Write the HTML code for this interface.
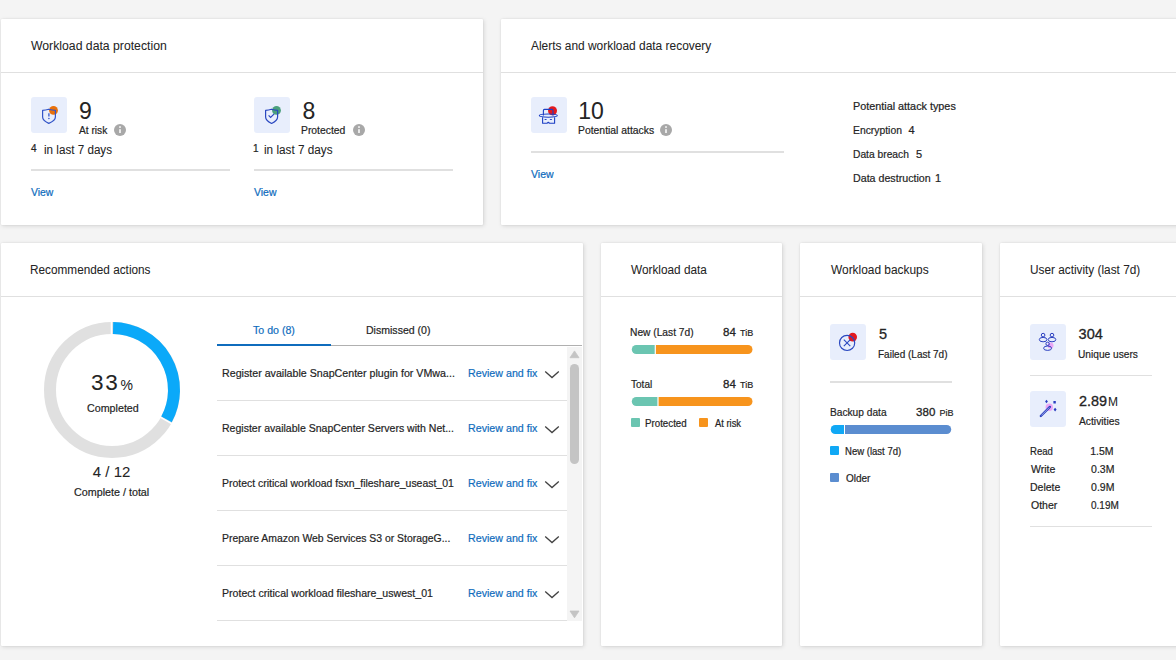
<!DOCTYPE html>
<html><head><meta charset="utf-8"><style>
html,body{margin:0;padding:0;}
body{width:1176px;height:660px;overflow:hidden;background:#f4f4f4;position:relative;font-family:"Liberation Sans",sans-serif;}
.abs{position:absolute;}
.card{position:absolute;background:#fff;border-radius:1px;box-shadow:1px 1px 4px rgba(0,0,0,0.13),0 0 1.5px rgba(0,0,0,0.10);}
.ib{position:absolute;width:36px;height:36px;background:#e8eefc;border-radius:3px;}
.ib svg{display:block}
.t{position:absolute;white-space:nowrap;line-height:1;transform-origin:0 0;}
.m{display:inline-block;width:0;height:0;}
</style></head><body>
<div class="card" style="left:1px;top:19px;width:482px;height:206px"></div>
<div class="card" style="left:501px;top:19px;width:700px;height:206px"></div>
<div class="card" style="left:1px;top:243px;width:582px;height:403px"></div>
<div class="card" style="left:601px;top:243px;width:181px;height:403px"></div>
<div class="card" style="left:800px;top:243px;width:182px;height:403px"></div>
<div class="card" style="left:1000px;top:243px;width:200px;height:403px"></div>
<div class="abs" style="left:1px;top:72px;width:482px;height:1px;background:#e0e0e0;"></div>
<div class="abs" style="left:501px;top:72px;width:700px;height:1px;background:#e0e0e0;"></div>
<div class="abs" style="left:1px;top:296px;width:582px;height:1px;background:#e0e0e0;"></div>
<div class="abs" style="left:601px;top:296px;width:181px;height:1px;background:#e0e0e0;"></div>
<div class="abs" style="left:800px;top:296px;width:182px;height:1px;background:#e0e0e0;"></div>
<div class="abs" style="left:1000px;top:296px;width:200px;height:1px;background:#e0e0e0;"></div>
<div class="ib" style="left:31px;top:97px"><svg width="36" height="36" viewBox="0 0 36 36"><circle cx="22.5" cy="13.4" r="4.4" fill="#e8700a"/><path d="M11.6 13.3 Q14.5 13.3 17.8 12.2 Q21.2 13.3 24.4 13.3 V20 Q24.4 23.5 17.8 26.4 Q11.6 23.5 11.6 20 Z" fill="none" stroke="#3355c8" stroke-width="1.2" stroke-linejoin="round"/><path d="M17.9 16.2 V19.4" stroke="#3355c8" stroke-width="1.3"/><circle cx="17.9" cy="21.5" r="0.8" fill="#3355c8"/></svg></div>
<svg class="abs" style="left:114px;top:124px" width="12" height="12" viewBox="0 0 12 12"><circle cx="6" cy="6" r="6" fill="#a8a8a8"/><rect x="5.1" y="2.2" width="1.8" height="1.7" fill="#f0f0f0"/><rect x="5.1" y="5.2" width="1.8" height="3.8" fill="#f0f0f0"/></svg>
<div class="abs" style="left:31px;top:169px;width:199px;height:2px;background:#e0e0e0;"></div>
<div class="ib" style="left:254px;top:97px"><svg width="36" height="36" viewBox="0 0 36 36"><circle cx="22.5" cy="13.4" r="4.4" fill="#4aa07c"/><path d="M11.6 13.3 Q14.5 13.3 17.6 12.2 Q20.8 13.3 23.6 13.3 V20 Q23.6 23.5 17.6 26.5 Q11.6 23.5 11.6 20 Z" fill="none" stroke="#2a48c0" stroke-width="1.2" stroke-linejoin="round"/><path d="M14.6 18.4 L16.6 20.4 L20.2 16.8" fill="none" stroke="#2a48c0" stroke-width="1.2"/></svg></div>
<svg class="abs" style="left:353px;top:124px" width="12" height="12" viewBox="0 0 12 12"><circle cx="6" cy="6" r="6" fill="#a8a8a8"/><rect x="5.1" y="2.2" width="1.8" height="1.7" fill="#f0f0f0"/><rect x="5.1" y="5.2" width="1.8" height="3.8" fill="#f0f0f0"/></svg>
<div class="abs" style="left:254px;top:169px;width:199px;height:2px;background:#e0e0e0;"></div>
<div class="ib" style="left:531px;top:97px"><svg width="36" height="36" viewBox="0 0 36 36"><circle cx="21.5" cy="13.8" r="4.5" fill="#e3191e"/><path d="M12.4 18.4 V13.4 Q12.4 12.4 13.4 12.4 H21 Q22 12.4 22 13.4 V18.4" fill="none" stroke="#1d3fc4" stroke-width="1.1"/><ellipse cx="17.3" cy="18.6" rx="9" ry="1.6" fill="none" stroke="#1d3fc4" stroke-width="1.1"/><path d="M11.6 20.2 V26.2 H16 L17.3 25.2 L18.6 26.2 H23.6 V20.2" fill="none" stroke="#1d3fc4" stroke-width="1.1" stroke-linejoin="round"/><ellipse cx="14.6" cy="22.5" rx="1.2" ry="0.6" fill="#1d3fc4"/><ellipse cx="19.9" cy="22.5" rx="1.2" ry="0.6" fill="#1d3fc4"/></svg></div>
<svg class="abs" style="left:660px;top:124px" width="12" height="12" viewBox="0 0 12 12"><circle cx="6" cy="6" r="6" fill="#a8a8a8"/><rect x="5.1" y="2.2" width="1.8" height="1.7" fill="#f0f0f0"/><rect x="5.1" y="5.2" width="1.8" height="3.8" fill="#f0f0f0"/></svg>
<div class="abs" style="left:531px;top:151px;width:253px;height:2px;background:#e0e0e0;"></div>
<svg class="abs" style="left:0;top:0" width="300" height="660"><circle cx="112" cy="389.9" r="62" fill="none" stroke="#e0e0e0" stroke-width="12"/><path d="M113.08 327.91 A62 62 0 0 1 166.49 419.48" fill="none" stroke="#0ba9f9" stroke-width="12"/><path d="M111.4 320.9 V334.9" stroke="#fff" stroke-width="1.4"/><path d="M165.96 420.43 L172.05 423.88 M159.87 416.98 L165.96 420.43" stroke="#fff" stroke-width="1.4"/></svg>
<div class="abs" style="left:217px;top:345px;width:365px;height:1px;background:#b0b0b0;"></div>
<div class="abs" style="left:217px;top:344px;width:114px;height:2px;background:#0f6cbd;"></div>
<div class="abs" style="left:217px;top:400px;width:350px;height:1px;background:#e0e0e0;"></div>
<svg class="abs" style="left:544px;top:370px" width="16" height="10" viewBox="0 0 16 10"><path d="M1.2 1.5 L8 7.6 L14.8 1.5" fill="none" stroke="#424242" stroke-width="1.3"/></svg>
<div class="abs" style="left:217px;top:455px;width:350px;height:1px;background:#e0e0e0;"></div>
<svg class="abs" style="left:544px;top:425px" width="16" height="10" viewBox="0 0 16 10"><path d="M1.2 1.5 L8 7.6 L14.8 1.5" fill="none" stroke="#424242" stroke-width="1.3"/></svg>
<div class="abs" style="left:217px;top:510px;width:350px;height:1px;background:#e0e0e0;"></div>
<svg class="abs" style="left:544px;top:480px" width="16" height="10" viewBox="0 0 16 10"><path d="M1.2 1.5 L8 7.6 L14.8 1.5" fill="none" stroke="#424242" stroke-width="1.3"/></svg>
<div class="abs" style="left:217px;top:565px;width:350px;height:1px;background:#e0e0e0;"></div>
<svg class="abs" style="left:544px;top:535px" width="16" height="10" viewBox="0 0 16 10"><path d="M1.2 1.5 L8 7.6 L14.8 1.5" fill="none" stroke="#424242" stroke-width="1.3"/></svg>
<div class="abs" style="left:217px;top:620px;width:350px;height:1px;background:#e0e0e0;"></div>
<svg class="abs" style="left:544px;top:590px" width="16" height="10" viewBox="0 0 16 10"><path d="M1.2 1.5 L8 7.6 L14.8 1.5" fill="none" stroke="#424242" stroke-width="1.3"/></svg>
<div class="abs" style="left:567px;top:347px;width:15px;height:274px;background:#f4f4f4;"></div>
<svg class="abs" style="left:567px;top:347px" width="15" height="274" viewBox="0 0 15 274"><path d="M3 10.7 L7.5 3.9 L12 10.7 Z" fill="#c4c4c4" stroke="#c4c4c4" stroke-width="0.8" stroke-linejoin="round"/><rect x="3" y="17" width="9" height="100" rx="4.5" fill="#c4c4c4"/><path d="M3 264 L7.5 270.8 L12 264 Z" fill="#c4c4c4" stroke="#c4c4c4" stroke-width="0.8" stroke-linejoin="round"/></svg>
<svg class="abs" style="left:631px;top:345px" width="122" height="9"><defs><clipPath id="c345"><rect x="0.8" y="0" width="120.7" height="9" rx="4.5"/></clipPath></defs><g clip-path="url(#c345)"><rect x="0" y="0" width="23.700000000000045" height="9" fill="#6bc5b1"/><rect x="24.900000000000045" y="0" width="130" height="9" fill="#f7941d"/></g></svg>
<svg class="abs" style="left:631px;top:397px" width="122" height="9"><defs><clipPath id="c397"><rect x="0.8" y="0" width="120.7" height="9" rx="4.5"/></clipPath></defs><g clip-path="url(#c397)"><rect x="0" y="0" width="26.399999999999977" height="9" fill="#6bc5b1"/><rect x="27.599999999999977" y="0" width="130" height="9" fill="#f7941d"/></g></svg>
<div class="abs" style="left:631px;top:418px;width:8.5px;height:8.5px;background:#6bc5b1;border-radius:1px"></div>
<div class="abs" style="left:699px;top:418px;width:8.5px;height:8.5px;background:#f7941d;border-radius:1px"></div>
<div class="ib" style="left:830px;top:324px"><svg width="36" height="36" viewBox="0 0 36 36"><circle cx="22.7" cy="13.1" r="4.3" fill="#e3191e"/><circle cx="17.1" cy="18.9" r="7.6" fill="none" stroke="#2a48c0" stroke-width="1.15"/><path d="M13.8 15.7 L20.3 22.2 M20.3 15.7 L13.8 22.2" stroke="#2a48c0" stroke-width="1.1"/></svg></div>
<div class="abs" style="left:830px;top:381px;width:122px;height:2px;background:#e0e0e0;"></div>
<svg class="abs" style="left:830px;top:425px" width="122" height="9"><defs><clipPath id="cb"><rect x="0.7" y="0" width="120.5" height="9" rx="4.5"/></clipPath></defs><g clip-path="url(#cb)"><rect x="0" y="0" width="14" height="9" fill="#10a8f5"/><rect x="15" y="0" width="130" height="9" fill="#5b8dd0"/></g></svg>
<div class="abs" style="left:830px;top:446px;width:9px;height:9px;background:#10a8f5;border-radius:1px"></div>
<div class="abs" style="left:830px;top:473px;width:9px;height:9px;background:#5b8dd0;border-radius:1px"></div>
<div class="ib" style="left:1030px;top:324px"><svg width="36" height="36" viewBox="0 0 36 36"><circle cx="20.5" cy="21.6" r="3" fill="#eaa6f5"/><circle cx="13.1" cy="11.1" r="1.8" fill="none" stroke="#2a3fc0" stroke-width="1"/><ellipse cx="13.1" cy="15.6" rx="3.8" ry="2.2" fill="none" stroke="#2a3fc0" stroke-width="1"/><circle cx="22" cy="11.1" r="1.8" fill="none" stroke="#2a3fc0" stroke-width="1"/><ellipse cx="22" cy="15.6" rx="3.8" ry="2.2" fill="none" stroke="#2a3fc0" stroke-width="1"/><circle cx="17.6" cy="19.8" r="1.7" fill="none" stroke="#2a3fc0" stroke-width="1"/><ellipse cx="17.6" cy="24.2" rx="4" ry="2.2" fill="none" stroke="#2a3fc0" stroke-width="1"/></svg></div>
<div class="abs" style="left:1030px;top:375px;width:122px;height:1px;background:#e0e0e0;"></div>
<div class="ib" style="left:1030px;top:391px"><svg width="36" height="36" viewBox="0 0 36 36"><circle cx="19.3" cy="16.2" r="3.7" fill="#eaa6f5"/><path d="M10.8 25 L19.9 15.9" stroke="#2a3fc0" stroke-width="2.3" stroke-linecap="round"/><path d="M11.3 24.5 L19.4 16.4" stroke="#dfe4f8" stroke-width="0.6"/><path d="M16.5 8.8 L17.9 10.4 L16.5 12.2 L15.1 10.4Z M23.4 10.1 H25.8 V12.4 H23.4Z M25.1 16.8 L26.6 18.6 L25.1 20.4 L23.6 18.6Z" fill="#2a3fc0"/></svg></div>
<div class="abs" style="left:1030px;top:526px;width:122px;height:1px;background:#e0e0e0;"></div>
<span class="t" id="t0" style="left:31.00px;top:40.00px;font-size:12.5px;color:#242424;transform:scaleX(0.9783);-webkit-text-stroke:0.05px #242424">Workload data protection<i class="m"></i></span>
<span class="t" id="t1" style="left:79.00px;top:100.01px;font-size:23px;color:#242424;-webkit-text-stroke:0.05px #242424">9<i class="m"></i></span>
<span class="t" id="t2" style="left:79.30px;top:125.01px;font-size:11px;color:#242424;transform:scaleX(0.9258);-webkit-text-stroke:0.2px #242424">At risk<i class="m"></i></span>
<span class="t" id="t3" style="left:31.00px;top:144.00px;font-size:10px;color:#242424;-webkit-text-stroke:0.22px #242424">4<i class="m"></i></span>
<span class="t" id="t4" style="left:44.40px;top:144.00px;font-size:12px;color:#242424;transform:scaleX(0.9712);-webkit-text-stroke:0.05px #242424">in last 7 days<i class="m"></i></span>
<span class="t" id="t5" style="left:31.30px;top:187.01px;font-size:11px;color:#0f6cbd;transform:scaleX(0.9458);-webkit-text-stroke:0.22px #0f6cbd">View<i class="m"></i></span>
<span class="t" id="t6" style="left:302.60px;top:100.01px;font-size:23px;color:#242424;-webkit-text-stroke:0.05px #242424">8<i class="m"></i></span>
<span class="t" id="t7" style="left:301.20px;top:125.01px;font-size:11px;color:#242424;transform:scaleX(0.9413);-webkit-text-stroke:0.2px #242424">Protected<i class="m"></i></span>
<span class="t" id="t8" style="left:253.00px;top:144.00px;font-size:10px;color:#242424;-webkit-text-stroke:0.22px #242424">1<i class="m"></i></span>
<span class="t" id="t9" style="left:264.00px;top:144.00px;font-size:12px;color:#242424;transform:scaleX(0.9783);-webkit-text-stroke:0.05px #242424">in last 7 days<i class="m"></i></span>
<span class="t" id="t10" style="left:254.20px;top:187.01px;font-size:11px;color:#0f6cbd;transform:scaleX(0.9500);-webkit-text-stroke:0.22px #0f6cbd">View<i class="m"></i></span>
<span class="t" id="t11" style="left:531.00px;top:40.00px;font-size:12.5px;color:#242424;transform:scaleX(0.9540);-webkit-text-stroke:0.05px #242424">Alerts and workload data recovery<i class="m"></i></span>
<span class="t" id="t12" style="left:578.30px;top:100.01px;font-size:23px;color:#242424;-webkit-text-stroke:0.05px #242424">10<i class="m"></i></span>
<span class="t" id="t13" style="left:578.10px;top:125.01px;font-size:11px;color:#242424;transform:scaleX(0.9437);-webkit-text-stroke:0.2px #242424">Potential attacks<i class="m"></i></span>
<span class="t" id="t14" style="left:531.00px;top:169.01px;font-size:11px;color:#0f6cbd;transform:scaleX(0.9583);-webkit-text-stroke:0.22px #0f6cbd">View<i class="m"></i></span>
<span class="t" id="t15" style="left:853.00px;top:101.01px;font-size:11px;color:#242424;transform:scaleX(0.9831);-webkit-text-stroke:0.22px #242424">Potential attack types<i class="m"></i></span>
<span class="t" id="t16" style="left:853.00px;top:125.01px;font-size:11px;color:#242424;transform:scaleX(0.9412);-webkit-text-stroke:0.2px #242424">Encryption<i class="m"></i></span>
<span class="t" id="t17" style="left:908.60px;top:125.01px;font-size:11px;color:#242424;-webkit-text-stroke:0.22px #242424">4<i class="m"></i></span>
<span class="t" id="t18" style="left:853.00px;top:149.01px;font-size:11px;color:#242424;transform:scaleX(0.9322);-webkit-text-stroke:0.2px #242424">Data breach<i class="m"></i></span>
<span class="t" id="t19" style="left:916.00px;top:149.01px;font-size:11px;color:#242424;-webkit-text-stroke:0.22px #242424">5<i class="m"></i></span>
<span class="t" id="t20" style="left:853.00px;top:173.01px;font-size:11px;color:#242424;transform:scaleX(0.9700);-webkit-text-stroke:0.2px #242424">Data destruction<i class="m"></i></span>
<span class="t" id="t21" style="left:935.00px;top:173.01px;font-size:11px;color:#242424;-webkit-text-stroke:0.22px #242424">1<i class="m"></i></span>
<span class="t" id="t22" style="left:30.00px;top:264.00px;font-size:12.5px;color:#242424;transform:scaleX(0.9425);-webkit-text-stroke:0.05px #242424">Recommended actions<i class="m"></i></span>
<span class="t" id="t23" style="left:91.10px;top:372.00px;font-size:22.5px;color:#242424;letter-spacing:1.6px;-webkit-text-stroke:0.05px #242424">33<i class="m"></i></span>
<span class="t" id="t24" style="left:120.40px;top:378.01px;font-size:14px;color:#242424;-webkit-text-stroke:0.05px #242424">%<i class="m"></i></span>
<span class="t" id="t25" style="left:86.50px;top:403.01px;font-size:11px;color:#242424;transform:scaleX(0.9731);-webkit-text-stroke:0.2px #242424">Completed<i class="m"></i></span>
<span class="t" id="t26" style="left:92.80px;top:464.00px;font-size:15px;color:#242424;-webkit-text-stroke:0.05px #242424">4 / 12<i class="m"></i></span>
<span class="t" id="t27" style="left:74.10px;top:486.51px;font-size:11px;color:#242424;transform:scaleX(0.9766);-webkit-text-stroke:0.2px #242424">Complete / total<i class="m"></i></span>
<span class="t" id="t28" style="left:252.80px;top:325.01px;font-size:11px;color:#0f6cbd;transform:scaleX(0.9651);-webkit-text-stroke:0.2px #0f6cbd">To do (8)<i class="m"></i></span>
<span class="t" id="t29" style="left:366.20px;top:325.01px;font-size:11px;color:#242424;transform:scaleX(0.9591);-webkit-text-stroke:0.2px #242424">Dismissed (0)<i class="m"></i></span>
<span class="t" id="t30" style="left:222.00px;top:368.01px;font-size:11px;color:#242424;transform:scaleX(0.9690);-webkit-text-stroke:0.2px #242424">Register available SnapCenter plugin for VMwa...<i class="m"></i></span>
<span class="t" id="t31" style="left:468.40px;top:368.01px;font-size:11px;color:#0f6cbd;transform:scaleX(0.9700);-webkit-text-stroke:0.2px #0f6cbd">Review and fix<i class="m"></i></span>
<span class="t" id="t32" style="left:222.00px;top:423.01px;font-size:11px;color:#242424;transform:scaleX(0.9581);-webkit-text-stroke:0.2px #242424">Register available SnapCenter Servers with Net...<i class="m"></i></span>
<span class="t" id="t33" style="left:468.40px;top:423.01px;font-size:11px;color:#0f6cbd;transform:scaleX(0.9700);-webkit-text-stroke:0.2px #0f6cbd">Review and fix<i class="m"></i></span>
<span class="t" id="t34" style="left:222.00px;top:478.01px;font-size:11px;color:#242424;transform:scaleX(0.9502);-webkit-text-stroke:0.2px #242424">Protect critical workload fsxn_fileshare_useast_01<i class="m"></i></span>
<span class="t" id="t35" style="left:468.40px;top:478.01px;font-size:11px;color:#0f6cbd;transform:scaleX(0.9700);-webkit-text-stroke:0.2px #0f6cbd">Review and fix<i class="m"></i></span>
<span class="t" id="t36" style="left:222.00px;top:533.01px;font-size:11px;color:#242424;transform:scaleX(0.9463);-webkit-text-stroke:0.2px #242424">Prepare Amazon Web Services S3 or StorageG...<i class="m"></i></span>
<span class="t" id="t37" style="left:468.40px;top:533.01px;font-size:11px;color:#0f6cbd;transform:scaleX(0.9700);-webkit-text-stroke:0.2px #0f6cbd">Review and fix<i class="m"></i></span>
<span class="t" id="t38" style="left:222.00px;top:588.01px;font-size:11px;color:#242424;transform:scaleX(0.9608);-webkit-text-stroke:0.2px #242424">Protect critical workload fileshare_uswest_01<i class="m"></i></span>
<span class="t" id="t39" style="left:468.40px;top:588.01px;font-size:11px;color:#0f6cbd;transform:scaleX(0.9700);-webkit-text-stroke:0.2px #0f6cbd">Review and fix<i class="m"></i></span>
<span class="t" id="t40" style="left:631.00px;top:264.00px;font-size:12.5px;color:#242424;transform:scaleX(0.9444);-webkit-text-stroke:0.05px #242424">Workload data<i class="m"></i></span>
<span class="t" id="t41" style="left:630.20px;top:327.01px;font-size:11px;color:#242424;transform:scaleX(0.9284);-webkit-text-stroke:0.2px #242424">New (Last 7d)<i class="m"></i></span>
<span class="t" id="t42" style="left:723.10px;top:327.01px;font-size:11.5px;color:#242424;-webkit-text-stroke:0.3px #242424">84<i class="m"></i></span>
<span class="t" id="t43" style="left:740.00px;top:329.01px;font-size:9px;color:#242424;-webkit-text-stroke:0.2px #242424">TiB<i class="m"></i></span>
<span class="t" id="t44" style="left:631.00px;top:379.01px;font-size:11px;color:#242424;transform:scaleX(0.9130);-webkit-text-stroke:0.2px #242424">Total<i class="m"></i></span>
<span class="t" id="t45" style="left:723.10px;top:379.01px;font-size:11.5px;color:#242424;-webkit-text-stroke:0.3px #242424">84<i class="m"></i></span>
<span class="t" id="t46" style="left:740.00px;top:381.01px;font-size:9px;color:#242424;-webkit-text-stroke:0.2px #242424">TiB<i class="m"></i></span>
<span class="t" id="t47" style="left:644.80px;top:419.00px;font-size:10px;color:#242424;transform:scaleX(0.9738);-webkit-text-stroke:0.2px #242424">Protected<i class="m"></i></span>
<span class="t" id="t48" style="left:714.70px;top:419.00px;font-size:10px;color:#242424;transform:scaleX(0.9357);-webkit-text-stroke:0.2px #242424">At risk<i class="m"></i></span>
<span class="t" id="t49" style="left:831.00px;top:264.00px;font-size:12.5px;color:#242424;transform:scaleX(0.9520);-webkit-text-stroke:0.05px #242424">Workload backups<i class="m"></i></span>
<span class="t" id="t50" style="left:879.00px;top:326.60px;font-size:14.5px;color:#242424;-webkit-text-stroke:0.3px #242424">5<i class="m"></i></span>
<span class="t" id="t51" style="left:878.00px;top:349.01px;font-size:11px;color:#242424;transform:scaleX(0.9093);-webkit-text-stroke:0.2px #242424">Failed (Last 7d)<i class="m"></i></span>
<span class="t" id="t52" style="left:830.10px;top:407.01px;font-size:11px;color:#242424;transform:scaleX(0.9246);-webkit-text-stroke:0.2px #242424">Backup data<i class="m"></i></span>
<span class="t" id="t53" style="left:916.10px;top:407.01px;font-size:11.5px;color:#242424;-webkit-text-stroke:0.3px #242424">380<i class="m"></i></span>
<span class="t" id="t54" style="left:939.60px;top:409.01px;font-size:9px;color:#242424;-webkit-text-stroke:0.2px #242424">PiB<i class="m"></i></span>
<span class="t" id="t55" style="left:845.20px;top:447.00px;font-size:10px;color:#242424;transform:scaleX(0.9534);-webkit-text-stroke:0.2px #242424">New (last 7d)<i class="m"></i></span>
<span class="t" id="t56" style="left:846.00px;top:474.00px;font-size:10px;color:#242424;-webkit-text-stroke:0.2px #242424">Older<i class="m"></i></span>
<span class="t" id="t57" style="left:1030.00px;top:264.00px;font-size:12.5px;color:#242424;transform:scaleX(0.9443);-webkit-text-stroke:0.05px #242424">User activity (last 7d)<i class="m"></i></span>
<span class="t" id="t58" style="left:1078.60px;top:327.00px;font-size:14.5px;color:#242424;-webkit-text-stroke:0.3px #242424">304<i class="m"></i></span>
<span class="t" id="t59" style="left:1078.00px;top:349.01px;font-size:11px;color:#242424;transform:scaleX(0.9234);-webkit-text-stroke:0.2px #242424">Unique users<i class="m"></i></span>
<span class="t" id="t60" style="left:1078.60px;top:393.50px;font-size:14.5px;color:#242424;transform:scaleX(0.9937);-webkit-text-stroke:0.3px #242424">2.89<i class="m"></i></span>
<span class="t" id="t61" style="left:1108.00px;top:395.50px;font-size:12px;color:#242424;-webkit-text-stroke:0.05px #242424">M<i class="m"></i></span>
<span class="t" id="t62" style="left:1079.00px;top:415.51px;font-size:11px;color:#242424;transform:scaleX(0.9349);-webkit-text-stroke:0.2px #242424">Activities<i class="m"></i></span>
<span class="t" id="t63" style="left:1030.00px;top:446.01px;font-size:10.5px;color:#242424;transform:scaleX(0.9125);-webkit-text-stroke:0.2px #242424">Read<i class="m"></i></span>
<span class="t" id="t64" style="left:1090.20px;top:446.01px;font-size:10.5px;color:#242424;-webkit-text-stroke:0.2px #242424">1.5M<i class="m"></i></span>
<span class="t" id="t65" style="left:1031.00px;top:464.01px;font-size:10.5px;color:#242424;-webkit-text-stroke:0.2px #242424">Write<i class="m"></i></span>
<span class="t" id="t66" style="left:1091.10px;top:464.01px;font-size:10.5px;color:#242424;-webkit-text-stroke:0.2px #242424">0.3M<i class="m"></i></span>
<span class="t" id="t67" style="left:1030.00px;top:482.01px;font-size:10.5px;color:#242424;-webkit-text-stroke:0.2px #242424">Delete<i class="m"></i></span>
<span class="t" id="t68" style="left:1091.10px;top:482.01px;font-size:10.5px;color:#242424;-webkit-text-stroke:0.2px #242424">0.9M<i class="m"></i></span>
<span class="t" id="t69" style="left:1031.00px;top:500.01px;font-size:10.5px;color:#242424;-webkit-text-stroke:0.2px #242424">Other<i class="m"></i></span>
<span class="t" id="t70" style="left:1091.10px;top:500.01px;font-size:10.5px;color:#242424;transform:scaleX(0.9517);-webkit-text-stroke:0.2px #242424">0.19M<i class="m"></i></span>
</body></html>
